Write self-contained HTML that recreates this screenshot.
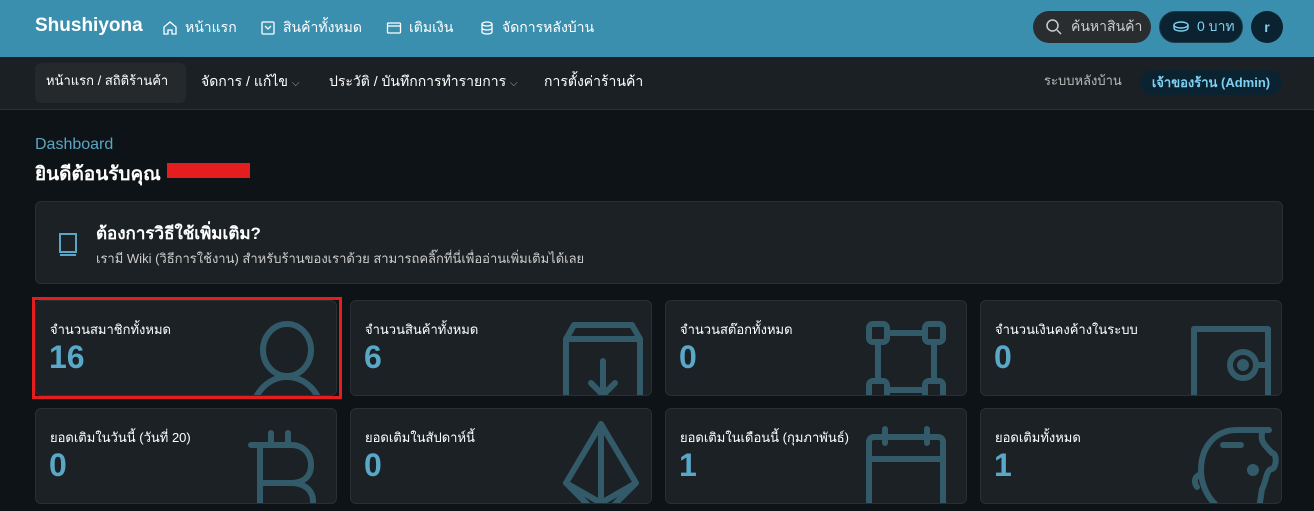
<!DOCTYPE html>
<html><head><meta charset="utf-8"><style>
*{box-sizing:border-box;margin:0;padding:0}
body{width:1314px;height:511px;overflow:hidden;background:#0d1316;font-family:"Liberation Sans","DejaVu Sans",sans-serif;color:#e6e9eb}
.top{height:57px;background:#3b8fae;position:relative}
.brand{position:absolute;left:35px;top:15px;font-size:19px;font-weight:bold;color:#fff}
.nav{position:absolute;top:17px;font-size:14px;color:#fff;display:flex;align-items:center;gap:7px}
.nav svg{width:16px;height:16px}
.pill{position:absolute;top:11px;height:32px;border-radius:16px;display:flex;align-items:center;font-size:14px}
.sub{height:53px;background:#1b2024;border-bottom:1px solid #2b3236;position:relative}
.si{position:absolute;top:14px;line-height:20px;font-size:14px;color:#fff}
.act{position:absolute;left:35px;top:6px;width:151px;height:40px;background:#25292c;border-radius:6px}
.h1{position:absolute;left:35px;top:136px;font-size:16px;color:#5aa6c4}
.h2{position:absolute;left:35px;top:159px;font-size:19px;font-weight:bold;color:#fff}
.red{position:absolute;left:167px;top:163px;width:83px;height:15px;background:#e41e1f}
.info{position:absolute;left:35px;top:201px;width:1248px;height:83px;background:#1b2124;border:1px solid #283034;border-radius:6px}
.card{position:absolute;width:302px;height:96px;background:#1b2124;border:1px solid #283034;border-radius:6px;overflow:hidden}
.card .t{position:absolute;left:14px;top:18px;font-size:13px;color:#fff}
.card .n{position:absolute;left:13px;top:38px;font-size:32px;font-weight:bold;color:#5aa8c8}
.card svg{position:absolute;right:14px;top:18px;width:80px;height:90px;fill:none;stroke:#335a69;stroke-width:6;stroke-linecap:round;stroke-linejoin:round}
</style></head><body>
<div class="top">
<div class="brand">Shushiyona</div>
<div class="nav" style="left:162px"><svg viewBox="0 0 16 16" fill="none" stroke="#fff" stroke-width="1.3"><path d="M2 14V7l6-5 6 5v7h-4v-4H6v4z"/></svg>หน้าแรก</div>
<div class="nav" style="left:260px"><svg viewBox="0 0 16 16" fill="none" stroke="#fff" stroke-width="1.3"><rect x="2" y="2" width="12" height="12" rx="1"/><path d="M5 6l3 3 3-3"/></svg>สินค้าทั้งหมด</div>
<div class="nav" style="left:386px"><svg viewBox="0 0 16 16" fill="none" stroke="#fff" stroke-width="1.3"><rect x="1.5" y="3" width="13" height="10" rx="1"/><path d="M1.5 6h13"/></svg>เติมเงิน</div>
<div class="nav" style="left:479px"><svg viewBox="0 0 16 16" fill="none" stroke="#fff" stroke-width="1.3"><ellipse cx="8" cy="4" rx="5" ry="2"/><path d="M3 4v8c0 1 2 2 5 2s5-1 5-2V4M3 8c0 1 2 2 5 2s5-1 5-2"/></svg>จัดการหลังบ้าน</div>
<div class="pill" style="left:1033px;width:118px;background:#2a2d2f;color:#ccc;padding-left:12px"><svg width="18" height="18" viewBox="0 0 18 18" fill="none" stroke="#ccc" stroke-width="1.5"><circle cx="7.5" cy="7.5" r="5.5"/><path d="M12 12l4 4"/></svg><span style="margin-left:8px">ค้นหาสินค้า</span></div>
<div class="pill" style="left:1159px;width:84px;background:#0b2230;color:#7fd0f0;padding-left:12px;border:1px solid #1d3b4c"><svg width="18" height="14" viewBox="0 0 18 14" fill="none" stroke="#7fd0f0" stroke-width="1.4"><ellipse cx="9" cy="5" rx="7" ry="3"/><path d="M2 5v3c0 1.7 3 3 7 3s7-1.3 7-3V5"/></svg><span style="margin-left:7px">0 บาท</span></div>
<div class="pill" style="left:1251px;width:32px;background:#0b2230;color:#7fd0f0;justify-content:center;font-weight:bold">r</div>
</div>
<div class="sub">
<div class="act"></div>
<div class="si" style="left:46px;font-size:13px">หน้าแรก / สถิติร้านค้า</div>
<div class="si" style="left:201px">จัดการ / แก้ไข <span style="font-size:10px;color:#aaa">⌵</span></div>
<div class="si" style="left:329px">ประวัติ / บันทึกการทำรายการ <span style="font-size:10px;color:#aaa">⌵</span></div>
<div class="si" style="left:544px">การตั้งค่าร้านค้า</div>
<div class="si" style="left:1044px;font-size:13px;color:#bbb">ระบบหลังบ้าน</div>
<div style="position:absolute;left:1140px;top:13px;width:142px;height:25px;border-radius:13px;background:#0b2230;color:#7fd0f0;font-size:13px;font-weight:bold;text-align:center;line-height:25px">เจ้าของร้าน (Admin)</div>
</div>
<div class="h1">Dashboard</div>
<div class="h2">ยินดีต้อนรับคุณ</div>
<div class="red"></div>
<div class="info">
<svg style="position:absolute;left:22px;top:29px" width="20" height="26" viewBox="0 0 20 26" fill="none" stroke="#5aa6c4" stroke-width="2"><path d="M2 21V3h16v18H2zM2 24h16"/></svg>
<div style="position:absolute;left:60px;top:18px;font-size:17px;font-weight:bold;color:#fff">ต้องการวิธีใช้เพิ่มเติม?</div>
<div style="position:absolute;left:60px;top:46px;font-size:13px;color:#ccc">เรามี Wiki (วิธีการใช้งาน) สำหรับร้านของเราด้วย สามารถคลิ๊กที่นี่เพื่ออ่านเพิ่มเติมได้เลย</div>
</div>
<div style="position:absolute;left:32px;top:297px;width:310px;height:102px;border:3px solid #e41e1f;z-index:2"></div>

<div class="card" style="left:35px;top:300px"><div class="t">จำนวนสมาชิกทั้งหมด</div><div class="n">16</div><svg viewBox="0 0 80 90" style="right:8px;top:16px"><ellipse cx="39" cy="33" rx="24" ry="26"/><path d="M4 90c6-20 20-30 35-30s29 10 35 30"/></svg></div>
<div class="card" style="left:350px;top:300px"><div class="t">จำนวนสินค้าทั้งหมด</div><div class="n">6</div><svg viewBox="0 0 80 90" style="right:8px;top:20px"><path d="M3 90V18l8-14h58l8 14v72M3 18h74M40 40v34M28 62l12 12 12-12"/></svg></div>
<div class="card" style="left:665px;top:300px"><div class="t">จำนวนสต๊อกทั้งหมด</div><div class="n">0</div><svg viewBox="0 0 80 90" style="right:20px;top:20px"><rect x="3" y="3" width="18" height="18" rx="4"/><rect x="59" y="3" width="18" height="18" rx="4"/><rect x="3" y="60" width="18" height="18" rx="4"/><rect x="59" y="60" width="18" height="18" rx="4"/><path d="M21 12h38M21 69h38M12 21v39M68 21v39"/></svg></div>
<div class="card" style="left:980px;top:300px"><div class="t">จำนวนเงินคงค้างในระบบ</div><div class="n">0</div><svg viewBox="0 0 80 90" style="right:10px;top:22px"><path d="M3 90V6h74v84"/><circle cx="52" cy="42" r="13"/><circle cx="52" cy="42" r="3" fill="#335a69"/><path d="M65 42h12"/></svg></div>

<div class="card" style="left:35px;top:408px"><div class="t">ยอดเติมในวันนี้ (วันที่ 20)</div><div class="n">0</div><svg viewBox="0 0 80 90" style="right:12px;top:14px"><path d="M16 22v68M27 22v-12M44 22v-12M7 22h40c12 0 20 8 20 20s-8 18-20 18H16M47 60c14 0 22 8 22 18s-6 16-22 16H7"/></svg></div>
<div class="card" style="left:350px;top:408px"><div class="t">ยอดเติมในสัปดาห์นี้</div><div class="n">0</div><svg viewBox="0 0 80 90" style="right:10px;top:12px"><path d="M40 3L5 62l35 35 35-35z M40 3v95M5 62l35 20 35-20"/></svg></div>
<div class="card" style="left:665px;top:408px"><div class="t">ยอดเติมในเดือนนี้ (กุมภาพันธ์)</div><div class="n">1</div><svg viewBox="0 0 80 90" style="right:20px;top:16px"><path d="M3 95V17c0-3 2-5 5-5h64c3 0 5 2 5 5v78M3 34h74M19 4v14M61 4v14"/></svg></div>
<div class="card" style="left:980px;top:408px"><div class="t">ยอดเติมทั้งหมด</div><div class="n">1</div><svg viewBox="0 0 110 90" style="right:-4px;top:16px;width:110px"><path d="M94 5H62C40 5 26 22 26 45c0 14 6 26 14 34l3 14M87 8c-2 10 5 14 10 20 5 0 5 14 0 16-6 0-6 14-10 20l-3 20M24 50c-5 2-5 8-2 12"/><path d="M48 20h18"/><circle cx="78" cy="45" r="3" fill="#335a69"/></svg></div>
</body></html>
